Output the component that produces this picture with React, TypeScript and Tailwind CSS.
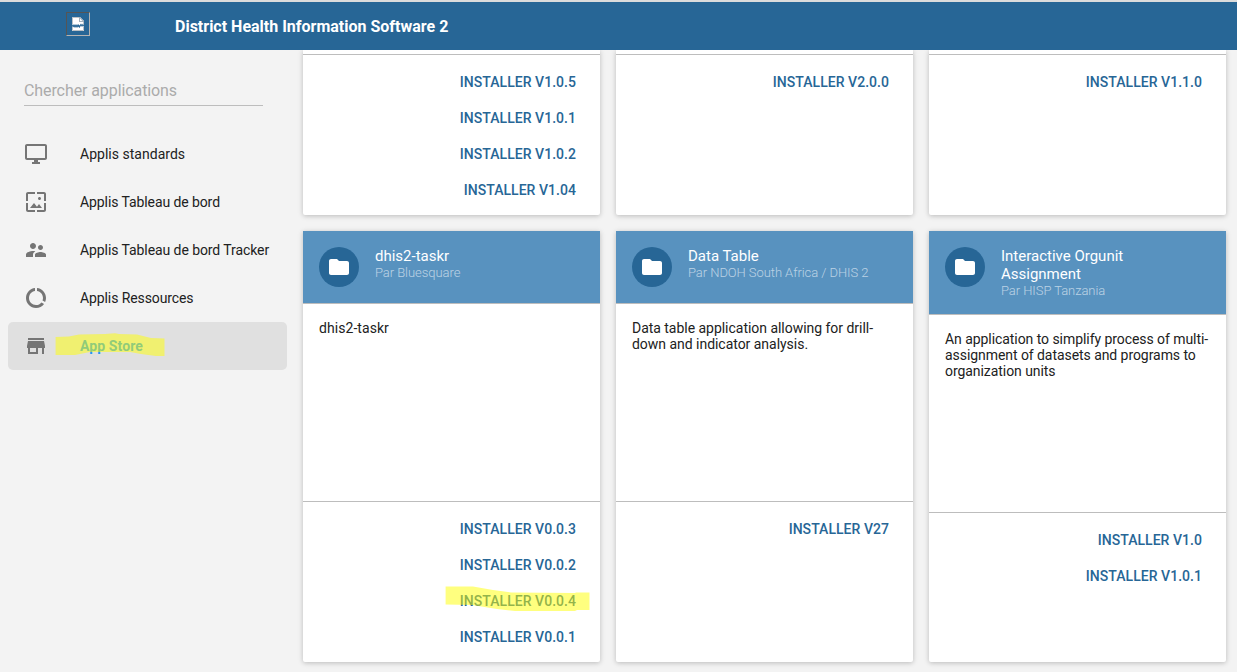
import React from 'react';

const ICONS = {
  desktop:
    'M21 2H3c-1.1 0-2 .9-2 2v12c0 1.1.9 2 2 2h7v2H8v2h8v-2h-2v-2h7c1.1 0 2-.9 2-2V4c0-1.1-.9-2-2-2zm0 14H3V4h18v12z',
  wallpaper:
    'M4 4h7V2H4c-1.1 0-2 .9-2 2v7h2V4zm6 9l-4 5h12l-3-4-2.03 2.71L10 13zm7-4.5c0-.83-.67-1.5-1.5-1.5S14 7.67 14 8.5s.67 1.5 1.5 1.5S17 9.33 17 8.5zM20 2h-7v2h7v7h2V4c0-1.1-.9-2-2-2zm0 18h-7v2h7c1.1 0 2-.9 2-2v-7h-2v7zM4 13H2v7c0 1.1.9 2 2 2h7v-2H4v-7z',
  people:
    'M16.5 12c1.38 0 2.49-1.12 2.49-2.5S17.88 7 16.5 7C15.12 7 14 8.12 14 9.5s1.12 2.5 2.5 2.5zM9 11c1.66 0 2.99-1.34 2.99-3S10.66 5 9 5C7.34 5 6 6.34 6 8s1.34 3 3 3zm7.5 3c-1.83 0-5.5.92-5.5 2.75V19h11v-2.25c0-1.83-3.67-2.75-5.5-2.75zM9 13c-2.33 0-7 1.17-7 3.5V19h7v-2.25c0-.85.33-2.34 2.37-3.47C10.5 13.1 9.66 13 9 13z',
  usage:
    'M13 2.05v3.03c3.39.49 6 3.39 6 6.92 0 .9-.18 1.75-.48 2.54l2.6 1.53c.56-1.24.88-2.62.88-4.07 0-5.18-3.95-9.45-9-9.95zM12 19c-3.87 0-7-3.13-7-7 0-3.53 2.61-6.43 6-6.92V2.05c-5.06.5-9 4.76-9 9.95 0 5.52 4.47 10 9.99 10 3.31 0 6.24-1.61 8.06-4.09l-2.6-1.53C16.17 17.98 14.21 19 12 19z',
  store:
    'M20 4H4v2h16V4zm1 10v-2l-1-5H4l-1 5v2h1v6h10v-6h4v6h2v-6h1zm-9 4H6v-4h6v4z',
  folder:
    'M10 4H4c-1.1 0-1.99.9-1.99 2L2 18c0 1.1.9 2 2 2h16c1.1 0 2-.9 2-2V8c0-1.1-.9-2-2-2h-8l-2-2z',
};

function Icon({ name, className }: { name: keyof typeof ICONS; className?: string }) {
  return (
    <svg viewBox="0 0 24 24" className={className} fill="currentColor" aria-hidden="true">
      <path d={ICONS[name]} />
    </svg>
  );
}

const NAV: { icon: keyof typeof ICONS; label: string; tracking?: string; active?: boolean }[] = [
  { icon: 'desktop', label: 'Applis standards', tracking: 'tracking-[0.02px]' },
  { icon: 'wallpaper', label: 'Applis Tableau de bord', tracking: 'tracking-[-0.09px]' },
  { icon: 'people', label: 'Applis Tableau de bord Tracker', tracking: 'tracking-[-0.08px]' },
  { icon: 'usage', label: 'Applis Ressources', tracking: 'tracking-[-0.1px]' },
  { icon: 'store', label: 'App Store', active: true },
];

function Header() {
  return (
    <header className="relative z-10 flex h-[50px] shrink-0 items-start border-t-2 border-[#dcdcdc] bg-[#276696]">
      <div className="mt-[10px] ml-[66px] flex h-6 w-6 border border-t-[#555] border-r-[#b4b4b4] border-b-[#b4b4b4] border-l-[#555]">
        <svg viewBox="0 0 12 14" className="mt-1 ml-[5px] h-[14px] w-3" aria-hidden="true">
          <path d="M0 0H8L12 4V8L11 6.500 10 8 9 6.500 7.500 8.500 6 7 5 8.500 4 7 3 8.500 2 7 1 8.500 0 7z" fill="#fff" />
          <path d="M7 0h1l4 4v1H7z" fill="#a3b0bb" />
          <path d="M8 1.500v2.500h2.500z" fill="#fff" />
          <path d="M0 9L1 10.500 2 9.500 3 11 4 9.500 5 11 6 9.500 7.500 11 9 8.500 10 10 11 8.500 12 10V14H0z" fill="#fff" />
          <path d="M.5 0v7M0 .5h7M.5 10v3.500h11V10M11.500 5v2.500" fill="none" stroke="#bcc1c6" strokeWidth="1" />
        </svg>
      </div>
      <div className="ml-[85px] text-base leading-[49px] font-bold text-white">
        District Health Information Software 2
      </div>
    </header>
  );
}

function Sidebar() {
  return (
    <aside className="w-[295px] shrink-0 pt-7 pr-2 pl-2">
      <div className="mr-6 ml-4 flex h-7 items-center border-b border-[#bdbdbd] pb-[2px] text-base tracking-[-0.09px] text-[#ababab]">
        Chercher applications
      </div>
      <nav className="mt-6">
        {NAV.map((item) => (
          <div
            key={item.label}
            className={
              item.active
                ? 'relative flex h-12 items-center rounded-[5px] bg-[#e0e0e0] pl-4'
                : 'flex h-12 items-center pl-4'
            }
          >
            <Icon name={item.icon} className="h-6 w-6 text-[#757575]" />
            <span
              className={
                item.active
                  ? 'ml-8 text-sm font-bold tracking-[0.1px] text-[#2196f3]'
                  : `ml-8 text-sm whitespace-nowrap text-[#212121] ${item.tracking}`
              }
            >
              {item.label}
            </span>
            {item.active && (
              <svg
                viewBox="0 0 110 23"
                className="absolute top-[11px] left-[47px] h-[23px] w-[110px]"
                aria-hidden="true"
              >
                <path
                  d="M.6 4L14 3.500 24 1.500 50 1 60 .2 64 1 82 1.500 96 5 109.500 5.500V23H101L86 21 75 19H35L20 22H.6z"
                  fill="#ffff00"
                  fillOpacity=".5"
                />
              </svg>
            )}
          </div>
        ))}
      </nav>
    </aside>
  );
}

function Versions({ items, marked }: { items: string[]; marked?: string }) {
  return (
    <div className="h-[160px] border-t border-[#bdbdbd] pt-[9px] pr-6">
      {items.map((v) => (
        <div
          key={v}
          className="relative flex h-9 items-center justify-end text-sm font-medium tracking-[0.04px] text-[#276696]"
        >
          INSTALLER {v}
          {v === marked && (
            <svg
              viewBox="0 0 145 26"
              className="absolute top-[3px] right-[-14px] h-[26px] w-[145px]"
              aria-hidden="true"
            >
              <path
                d="M.6 .5H28L48 4 66 6.500 130 7 131 6.500H144.500V24H132L130 25H70L52 23 27 19 .6 18.500z"
                fill="#ffff00"
                fillOpacity=".5"
              />
            </svg>
          )}
        </div>
      ))}
    </div>
  );
}

interface AppInfo {
  title: string;
  author: string;
  description: string;
  descriptionTracking: string;
  versions: string[];
  marked?: string;
}

const CARD = 'w-[297px] shrink-0 rounded-[2px] bg-white shadow-[0_1px_6px_rgba(0,0,0,0.12),0_1px_4px_rgba(0,0,0,0.12)]';

function AppCard({ app }: { app: AppInfo }) {
  return (
    <article className={`${CARD} flex h-[431px] flex-col overflow-hidden rounded-t-none`}>
      <div className="flex shrink-0 bg-[#5892bf] p-4">
        <div className="flex h-10 w-10 shrink-0 items-center justify-center rounded-full bg-[#276696] text-white">
          <Icon name="folder" className="h-6 w-6" />
        </div>
        <div className="ml-4 w-[150px]">
          <div className="text-[15px] leading-[18px] text-white">{app.title}</div>
          <div className="text-[13px] leading-[15px] font-light tracking-[-0.06px] whitespace-nowrap text-white/60">
            {app.author}
          </div>
        </div>
      </div>
      <div
        className={`h-[198px] shrink-0 border-t border-[#bdbdbd] py-4 pr-[14px] pl-4 text-sm leading-4 text-[#212121] ${app.descriptionTracking}`}
      >
        {app.description}
      </div>
      <Versions items={app.versions} marked={app.marked} />
    </article>
  );
}

const UPPER = [['V1.0.5', 'V1.0.1', 'V1.0.2', 'V1.04'], ['V2.0.0'], ['V1.1.0']];

const LOWER: AppInfo[] = [
  {
    title: 'dhis2-taskr',
    author: 'Par Bluesquare',
    description: 'dhis2-taskr',
    descriptionTracking: 'tracking-[0.06px]',
    versions: ['V0.0.3', 'V0.0.2', 'V0.0.4', 'V0.0.1'],
    marked: 'V0.0.4',
  },
  {
    title: 'Data Table',
    author: 'Par NDOH South Africa / DHIS 2',
    description: 'Data table application allowing for drill-down and indicator analysis.',
    descriptionTracking: 'tracking-[-0.03px]',
    versions: ['V27'],
  },
  {
    title: 'Interactive Orgunit Assignment',
    author: 'Par HISP Tanzania',
    description:
      'An application to simplify process of multi-assignment of datasets and programs to organization units',
    descriptionTracking: 'tracking-[-0.06px]',
    versions: ['V1.0', 'V1.0.1'],
  },
];

export default function App() {
  return (
    <div className="flex h-[672px] w-[1237px] flex-col overflow-hidden bg-[#f3f3f3] font-[Roboto,sans-serif]">
      <Header />
      <div className="flex min-h-0 flex-1">
        <Sidebar />
        <main className="flex flex-col gap-4 pl-2">
          <div className="flex gap-4">
            {UPPER.map((versions) => (
              <article key={versions[0]} className={`${CARD} h-[165px] rounded-t-none pt-1`}>
                <Versions items={versions} />
              </article>
            ))}
          </div>
          <div className="flex gap-4">
            {LOWER.map((app) => (
              <AppCard key={app.title} app={app} />
            ))}
          </div>
        </main>
      </div>
    </div>
  );
}
